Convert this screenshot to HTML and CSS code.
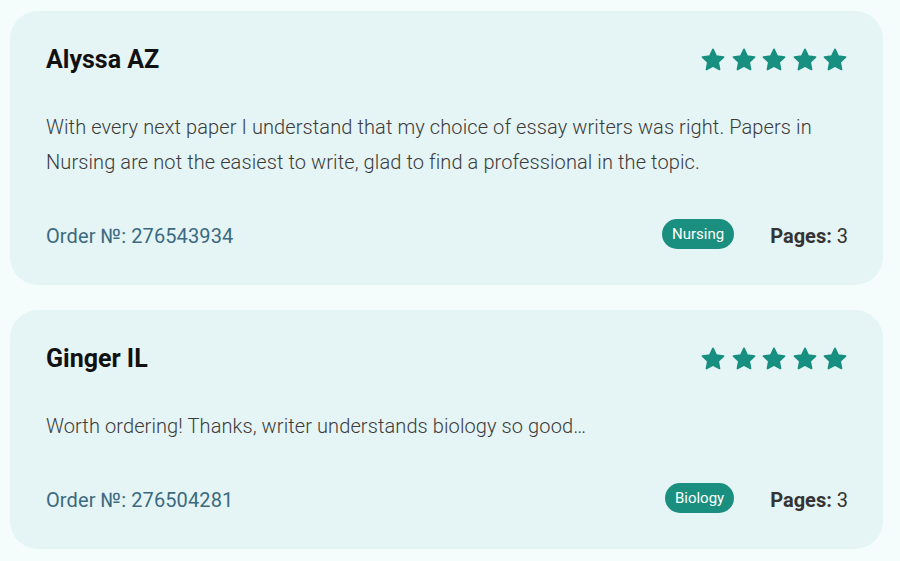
FILE: index.html
```html
<!DOCTYPE html>
<html lang="en">
<head>
<meta charset="utf-8">
<title>Reviews</title>
<link rel="stylesheet" href="styles.css">
</head>
<body>
<svg width="0" height="0" class="defs" aria-hidden="true">
  <defs>
    <symbol id="star" viewBox="0 0 24 24">
      <path d="M12 2.2l2.95 6.2 6.75.9-4.95 4.7 1.25 6.75L12 17.45l-6 3.3 1.25-6.75L2.3 9.3l6.75-.9z" fill="currentColor" stroke="currentColor" stroke-width="1.6" stroke-linejoin="round"/>
    </symbol>
  </defs>
</svg>
<main class="reviews">
  <article class="card">
    <div class="head">
      <h2 class="name">Alyssa AZ</h2>
      <div class="stars">
        <svg class="star"><use href="#star"/></svg>
        <svg class="star"><use href="#star"/></svg>
        <svg class="star"><use href="#star"/></svg>
        <svg class="star"><use href="#star"/></svg>
        <svg class="star"><use href="#star"/></svg>
      </div>
    </div>
    <p class="text">With every next paper I understand that my choice of essay writers was right. Papers in Nursing are not the easiest to write, glad to find a professional in the topic.</p>
    <div class="foot">
      <span class="order">Order №: 276543934</span>
      <span class="tag">Nursing</span>
      <span class="pages"><b>Pages:</b> 3</span>
    </div>
  </article>
  <article class="card">
    <div class="head">
      <h2 class="name">Ginger IL</h2>
      <div class="stars">
        <svg class="star"><use href="#star"/></svg>
        <svg class="star"><use href="#star"/></svg>
        <svg class="star"><use href="#star"/></svg>
        <svg class="star"><use href="#star"/></svg>
        <svg class="star"><use href="#star"/></svg>
      </div>
    </div>
    <p class="text">Worth ordering! Thanks, writer understands biology so good…</p>
    <div class="foot">
      <span class="order">Order №: 276504281</span>
      <span class="tag">Biology</span>
      <span class="pages"><b>Pages:</b> 3</span>
    </div>
  </article>
</main>
</body>
</html>
```
FILE: styles.css
```css
html, body {
  margin: 0;
  padding: 0;
  background: #f5fcfc;
  font-family: Roboto, "Liberation Sans", sans-serif;
}
.defs {
  position: absolute;
  width: 0;
  height: 0;
}
.reviews {
  display: flex;
  flex-direction: column;
  gap: 25px;
  padding: 11px 17px 0 10px;
}
.card {
  background: #e5f4f4;
  border-radius: 28px;
  padding: 34px 35px 34px 36px;
}
.head {
  display: flex;
  justify-content: space-between;
  align-items: center;
}
.name {
  margin: 0;
  font-size: 25px;
  line-height: 30px;
  font-weight: 700;
  color: #111;
}
.stars {
  display: flex;
  gap: 4.5px;
  color: #178f81;
}
.star {
  width: 26px;
  height: 26px;
}
.text {
  margin: 35px 0 0;
  font-size: 20px;
  line-height: 35px;
  font-weight: 300;
  letter-spacing: 0.1px;
  color: #3b3b3b;
}
.foot {
  display: flex;
  align-items: flex-start;
  margin-top: 39px;
}
.order {
  flex: 1;
  margin-top: 2px;
  font-size: 20px;
  line-height: 30px;
  letter-spacing: 0.1px;
  color: #3b6a80;
}
.tag {
  background: #1a8f80;
  color: #fff;
  font-size: 15px;
  line-height: 30px;
  height: 30px;
  padding: 0 10px;
  border-radius: 15px;
}
.pages {
  margin-top: 2px;
  margin-left: 36px;
  font-size: 20px;
  line-height: 30px;
  color: #333;
}
.pages b {
  font-weight: 700;
}
```
